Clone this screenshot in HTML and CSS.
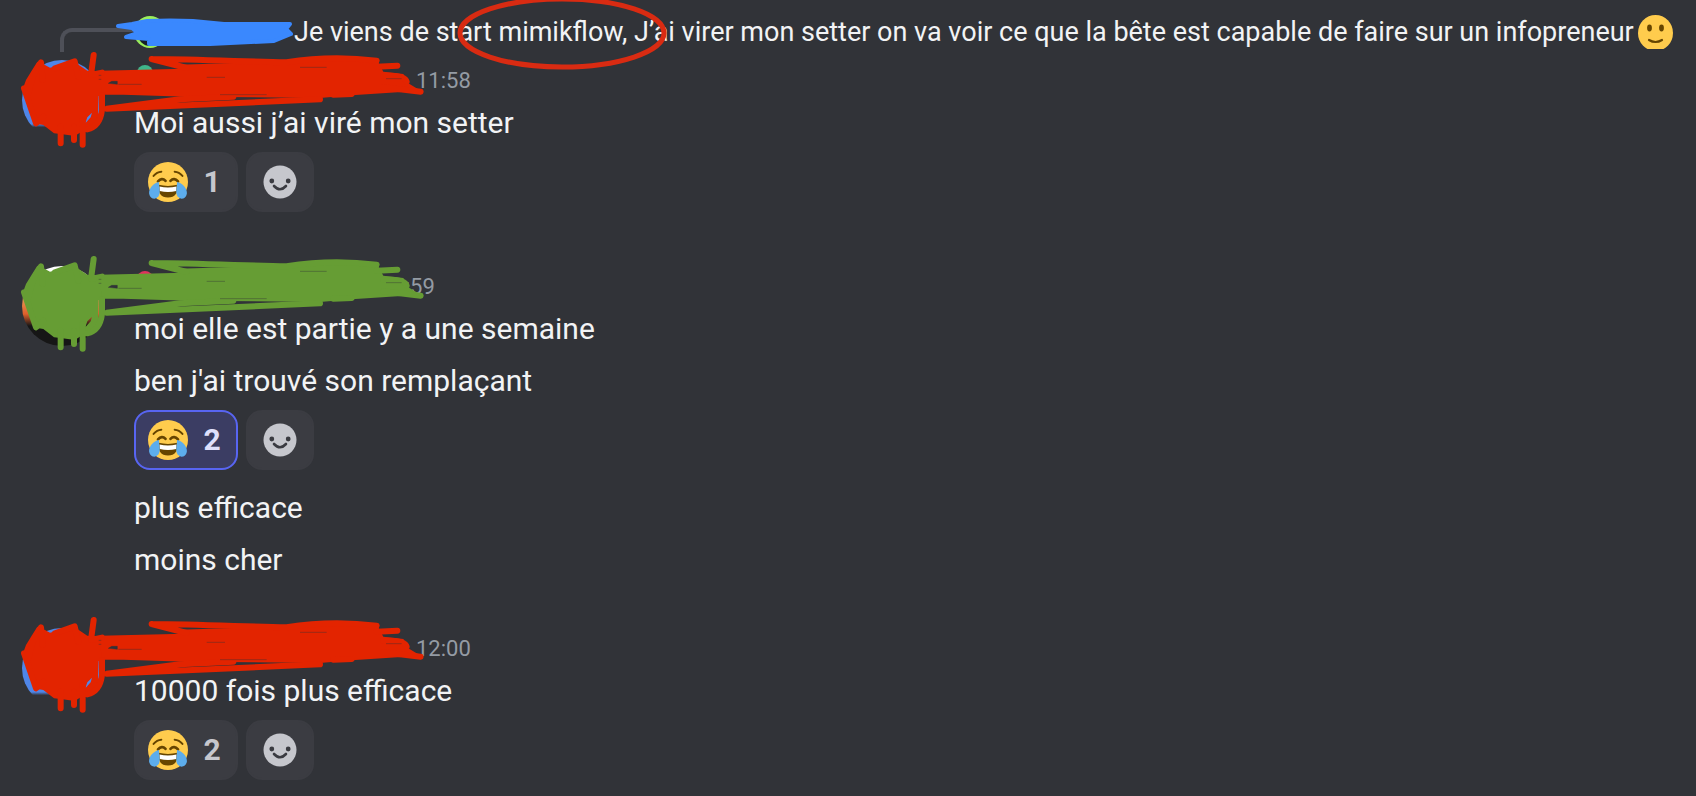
FILE: index.html
```
<!DOCTYPE html>
<html lang="fr">
<head>
<meta charset="utf-8">
<title>Discussion</title>
<link rel="stylesheet" href="styles.css">
</head>
<body>
<!-- shared drawings -->
<svg class="defs" aria-hidden="true">
	<symbol id="joy" viewBox="0 0 36 36">
		<circle cx="18" cy="18" r="18" fill="#ffcc4d"/>
		<g fill="none" stroke="#664500" stroke-width="1.8" stroke-linecap="round">
			<path d="M5 12.500Q8 9 12 8.700M31 12.500Q28 9 24 8.700"/>
			<path stroke-width="2.400" d="M9 17.500Q12.500 13.500 15.800 17M20.200 17Q23.500 13.500 27 17.500"/>
		</g>
		<path fill="#664500" d="M9.500 20.500Q18 22.500 26.500 20.500Q27.500 32 18 32Q8.500 32 9.500 20.500Z"/>
		<path fill="#fff" d="M10.300 22Q18 24 25.700 22L25.500 26Q18 28 10.500 26Z"/>
		<path fill="#5dadec" d="M9.800 18C5 19 .5 24 1 28.500Q2 33 6 33Q10.500 32 10.600 27ZM26.200 18C31 19 35.500 24 35 28.500Q34 33 30 33Q25.500 32 25.400 27Z"/>
	</symbol>
	<symbol id="smile" viewBox="0 0 35 34" preserveAspectRatio="none">
		<ellipse cx="17.500" cy="18" rx="17.500" ry="18" fill="#ffcc4d"/>
		<ellipse cx="11.500" cy="13" rx="2.400" ry="3.400" fill="#664500"/>
		<ellipse cx="23.500" cy="13" rx="2.400" ry="3.400" fill="#664500"/>
		<path d="M11 25Q17.500 29 24 25" fill="none" stroke="#664500" stroke-width="2.200" stroke-linecap="round"/>
	</symbol>
	<symbol id="add" viewBox="0 0 34 34">
		<circle cx="17" cy="17" r="16.500" fill="#c6c7cd"/>
		<circle cx="8.800" cy="16" r="2.400" fill="#3a3b41"/>
		<circle cx="25.200" cy="16" r="2.400" fill="#3a3b41"/>
		<path d="M11 21Q17 27.500 23 21" fill="none" stroke="#3a3b41" stroke-width="2.600" stroke-linecap="round"/>
	</symbol>
	<symbol id="scribble" viewBox="0 0 1320 690">
		<path fill="currentColor" d="M300 212L550 206L530 194L740 188L860 183L1010 172L1130 178L1150 215L1210 222L1225 250L1262 272L1055 286L960 294L560 290L370 284L300 284Z"/>
		<path fill="currentColor" fill-rule="evenodd" d="M70 262L78 240L95 212L112 185L135 195L150 203L180 195L232 192L262 212L300 215L308 330L288 375L255 388L225 408L182 402L162 400L130 375L112 372L90 320ZM80 285L84 310L94 322L99 318L89 306L86 288ZM296 288L294 345L300 330L301 288ZM256 370L272 352L276 338L262 352Z"/>
		<g fill="none" stroke="currentColor" stroke-width="18" stroke-linecap="round" stroke-linejoin="round">
			<path d="M455 177C600 178 740 185 860 187C950 172 1050 172 1130 182M455 177L560 204M1130 200L1192 197M1150 227Q1215 225 1220 245M1150 262L1262 275M960 298L320 326L540 298L700 290M1000 284L1055 282"/>
			<path d="M72 265L108 370L130 350M82 290L100 225L123 187L128 240M165 205L224 184L235 230M281 165L273 225L306 218M182 380V430M222 380V420M248 360V434M306 285V330Q300 380 262 388"/>
		</g>
		<!-- thin spots left between the strokes -->
		<path class="gaps" d="M325 250L335 244H352V253ZM355 253H425M900 202H980M660 284H800M620 232H675M1158 236H1205M296 226H304M296 238H304"/>
	</symbol>
</svg>

<main class="chat">
	<article class="message">
		<div class="reply">
			<span class="spine"></span>
			<span class="reply-author"><svg class="mini" viewBox="0 0 32 32"><circle cx="16" cy="16" r="16" fill="#9bee5c"/><circle cx="16" cy="18" r="12" fill="#17202a"/></svg></span>
			<span class="reply-text">Je viens de start mimikflow, J’ai virer mon setter on va voir ce que la bête est capable de faire sur un infopreneur</span>
			<svg class="reply-emoji"><use href="#smile"/></svg>
		</div>
		<div class="avatar avatar-blue"></div>
		<div class="body">
			<header class="head"><span class="author author-long"><i class="badge badge-teal"></i></span><time class="time">11:58</time></header>
			<p class="text">Moi aussi j’ai viré mon setter</p>
			<div class="reactions">
				<button type="button" class="reaction"><svg class="emoji"><use href="#joy"/></svg><span class="count">1</span></button>
				<button type="button" class="reaction reaction-add" aria-label="Ajouter une réaction"><svg class="add"><use href="#add"/></svg></button>
			</div>
		</div>
	</article>

	<article class="message">
		<div class="avatar avatar-fire"></div>
		<div class="body">
			<header class="head"><span class="author"><i class="badge badge-pink"></i></span><time class="time">11:59</time></header>
			<p class="text">moi elle est partie y a une semaine</p>
			<p class="text">ben j'ai trouvé son remplaçant</p>
			<div class="reactions">
				<button type="button" class="reaction reaction-me"><svg class="emoji"><use href="#joy"/></svg><span class="count">2</span></button>
				<button type="button" class="reaction reaction-add" aria-label="Ajouter une réaction"><svg class="add"><use href="#add"/></svg></button>
			</div>
			<p class="text">plus efficace</p>
			<p class="text">moins cher</p>
		</div>
	</article>

	<article class="message">
		<div class="avatar avatar-blue"></div>
		<div class="body">
			<header class="head"><span class="author author-long"></span><time class="time">12:00</time></header>
			<p class="text">10000 fois plus efficace</p>
			<div class="reactions">
				<button type="button" class="reaction"><svg class="emoji"><use href="#joy"/></svg><span class="count">2</span></button>
				<button type="button" class="reaction reaction-add" aria-label="Ajouter une réaction"><svg class="add"><use href="#add"/></svg></button>
			</div>
		</div>
	</article>

	<!-- pen marks drawn over the conversation -->
	<svg class="marks" aria-hidden="true">
		<path class="pen-blue" d="M118 26L132 24L147 21Q170 20 193 21L224 24L290 24L286 29L291 34L274 41L210 44L149 44V39L126 37L138 33L132 28Z"/>
		<use class="pen-red" href="#scribble" width="440" height="230"/>
		<use class="pen-green" href="#scribble" y="204" width="440" height="230"/>
		<use class="pen-red" href="#scribble" y="565" width="440" height="230"/>
		<ellipse class="pen-circle" cx="562" cy="33" rx="102" ry="34"/>
	</svg>
</main>
</body>
</html>
```
FILE: styles.css
```
*{margin: 0;padding: 0;box-sizing: border-box;}
body{background-color: #313338;color: #f2f3f5;font-family: Roboto,"Noto Sans",sans-serif;overflow-x: hidden;}
.defs{display: none;}
.chat{position: relative;}
.message{display: grid;grid-template-columns: 112px 1fr;padding-left: 22px;}
.message + .message{margin-top: 42px;}

.reply{grid-column: 1 / -1;display: flex;align-items: center;height: 60px;padding-top: 4px;white-space: nowrap;}
.spine{align-self: flex-end;width: 74px;height: 24px;margin: 0 0 8px 38px;border: solid #4e5058;border-width: 4px 0 0 4px;border-radius: 12px 0 0 0;}
.reply-author{width: 160px;}
.mini{display: block;width: 32px;height: 32px;}
.reply-text{font-size: 27px;line-height: 56px;}
.reply-emoji{width: 35px;height: 34px;margin-left: 4px;}

.avatar{width: 80px;height: 80px;border-radius: 50%;}
.avatar-blue{background: linear-gradient(#4f86e8 80%,#313338 84%);}
.avatar-fire{background: linear-gradient(#fff 12%,#e9b76a 30%,#e0602c 60%,#161616 75%);}

.head{display: flex;padding-top: 5px;line-height: 32px;}
.author{width: 246px;}
.author-long{width: 282px;}
.badge{display: block;width: 16px;height: 16px;margin-left: 3px;border-radius: 50%;}
.badge-teal{background-color: #3fb68b;}
.badge-pink{background-color: #e0335e;}
.time{color: #949ba4;font-size: 22px;}
.text{font-size: 30px;line-height: 52px;}

.reactions{display: flex;gap: 8px;padding: 3px 0 12px;}
.reaction{display: flex;align-items: center;gap: 10px;width: 104px;height: 60px;padding-left: 12px;border: 2px solid #3b3c42;border-radius: 16px;background-color: #3b3c42;color: #c6c7cd;font: bold 30px Roboto,sans-serif;cursor: pointer;}
.reaction-add{justify-content: center;width: 68px;padding: 0;}
.reaction-me{border-color: #5865f2;background-color: #3b3d63;color: #dee0fc;}
.emoji{width: 40px;height: 40px;}
.count{width: 28px;line-height: 32px;text-align: center;}
.add{width: 34px;height: 34px;}

.marks{position: absolute;top: 0;left: 0;width: 100%;height: 100%;pointer-events: none;}
.pen-blue{fill: #3a88fe;stroke: #3a88fe;stroke-width: 4px;stroke-linejoin: round;}
.pen-red{color: #e32400;}
.pen-green{color: #669d34;}
.gaps{fill: #313338;stroke: #313338;stroke-width: 2px;stroke-opacity: .6;}
.pen-circle{fill: none;stroke: #d92b12;stroke-width: 5px;}
```
